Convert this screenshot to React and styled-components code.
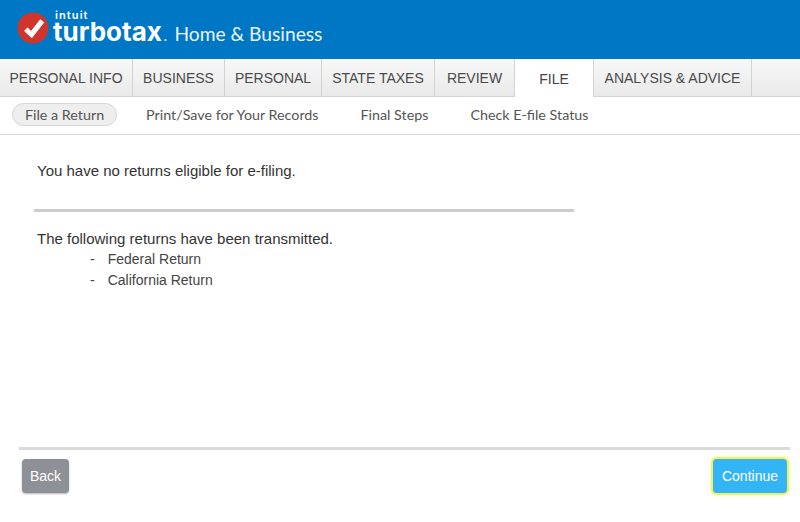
import React from "react";
import styled, { createGlobalStyle } from "styled-components";

const Global = createGlobalStyle`
  html, body {
    margin: 0;
    padding: 0;
    background: #fff;
    font-family: "Liberation Sans", Arial, sans-serif;
  }
`;

const Page = styled.div`
  width: 800px;
  height: 522px;
  display: flex;
  flex-direction: column;
  overflow: hidden;
`;

const Header = styled.header`
  height: 59px;
  background: #0077c5;
  display: flex;
  align-items: flex-start;
  padding-left: 17px;
  box-sizing: border-box;
`;

const Badge = styled.svg`
  width: 32px;
  height: 32px;
  margin-top: 12px;
  flex: none;
`;

const Wordmark = styled.div`
  margin-left: 4px;
  display: flex;
  flex-direction: column;
  color: #fff;
  font-family: Inter, sans-serif;
`;

const Intuit = styled.span`
  font-size: 11px;
  font-weight: 600;
  line-height: 9px;
  height: 9px;
  margin: 11px 0 0 2px;
  letter-spacing: 1.1px;
`;

const Brand = styled.span`
  font-size: 26px;
  font-weight: 700;
  line-height: 22px;
  margin-top: 1px;
`;

const Dot = styled.span`
  font-size: 16px;
  font-weight: 400;
  margin-left: 1px;
  color: #bfe3f7;
`;

const Product = styled.span`
  font-family: Lato, sans-serif;
  font-size: 19.2px;
  color: #eaf4fb;
  margin: 23px 0 0 7px;
  line-height: 22px;
`;

const Tabs = styled.nav`
  height: 38px;
  display: flex;
  background: linear-gradient(#f8f8f8, #e9e9e9);
  border-bottom: 1px solid #d4d4d4;
  box-sizing: border-box;
`;

const Tab = styled.div`
  width: ${(p) => p.$w}px;
  height: ${(p) => (p.$active ? "38px" : "37px")};
  box-sizing: border-box;
  display: flex;
  align-items: center;
  justify-content: center;
  font-size: 14px;
  color: ${(p) => (p.$active ? "#444" : "#4a4a4a")};
  border-right: 1px solid #d2d2d2;
  ${(p) => p.$active && "background: #fff; padding-top: 2px;"}
`;

const SubNav = styled.nav`
  height: 38px;
  display: flex;
  align-items: center;
  padding: 0 0 3px 12px;
  border-bottom: 1px solid #d9d9d9;
  box-sizing: border-box;
`;

const SubItem = styled.div`
  font-family: Lato, sans-serif;
  font-size: 14.3px;
  color: #555;
  height: 23px;
  line-height: 23px;
  box-sizing: border-box;
  margin-right: ${(p) => (p.$active ? "29px" : "42px")};
  ${(p) =>
    p.$active &&
    "padding: 0 12px; background: #eee; border: 1px solid #d6d6d6; border-radius: 12px; line-height: 21px;"}
`;

const Content = styled.main`
  flex: 1;
  padding: 27px 0 0 34px;
  color: #333;
  font-size: 15px;
`;

const Line = styled.p`
  margin: 0 0 0 3px;
  line-height: 18px;
`;

const Rule = styled.hr`
  width: 540px;
  height: 3px;
  margin: 29px 0 18px;
  border: none;
  background: #cccccc;
`;

const Returns = styled.ul`
  list-style: none;
  margin: 1px 0 0 56px;
  padding: 0;
  font-size: 14px;
  color: #444;
`;

const ReturnItem = styled.li`
  display: flex;
  height: 21px;
  line-height: 21px;
  gap: 13px;
`;

const Footer = styled.footer`
  margin: 0 10px 0 19px;
  border-top: 3px solid #d9d9d9;
  height: 75px;
  box-sizing: border-box;
  padding: 9px 3px 0 3px;
  display: flex;
  justify-content: space-between;
  align-items: flex-start;
`;

const Button = styled.button`
  height: 34px;
  border: none;
  border-radius: 4px;
  color: #fff;
  font-family: "Liberation Sans", sans-serif;
  font-size: 14px;
  padding: 0;
  width: ${(p) => (p.$primary ? "74px" : "47px")};
  background: ${(p) => (p.$primary ? "#33b5f5" : "#8d9096")};
  box-shadow: ${(p) =>
    p.$primary ? "0 0 0 2px #eef06a, 0 0 3px 3px #f8f9c0" : "0 1px 2px #b5b5b5"};
`;

const tabs = [
  ["PERSONAL INFO", 133],
  ["BUSINESS", 92],
  ["PERSONAL", 97],
  ["STATE TAXES", 113],
  ["REVIEW", 80],
  ["FILE", 79, true],
  ["ANALYSIS & ADVICE", 158],
];

export default function App() {
  return (
    <Page>
      <Global />
      <Header>
        <Badge viewBox="0 0 32 32">
          <circle cx="16" cy="16" r="15.5" fill="#d0352c" />
          <path
            d="M7.5 19L10.5 15.8L14 19.5L23.2 7.8L26.8 10.4L14.8 25.8Z"
            fill="#fff"
            stroke="#fff"
            strokeWidth="0.8"
            strokeLinejoin="round"
          />
        </Badge>
        <Wordmark>
          <Intuit>intuit</Intuit>
          <Brand>
            turbotax<Dot>.</Dot>
          </Brand>
        </Wordmark>
        <Product>Home &amp; Business</Product>
      </Header>
      <Tabs>
        {tabs.map(([label, w, active]) => (
          <Tab key={label} $w={w} $active={active}>
            {label}
          </Tab>
        ))}
      </Tabs>
      <SubNav>
        <SubItem $active>File a Return</SubItem>
        <SubItem>Print/Save for Your Records</SubItem>
        <SubItem>Final Steps</SubItem>
        <SubItem>Check E-file Status</SubItem>
      </SubNav>
      <Content>
        <Line>You have no returns eligible for e-filing.</Line>
        <Rule />
        <Line>The following returns have been transmitted.</Line>
        <Returns>
          <ReturnItem><span>-</span><span>Federal Return</span></ReturnItem>
          <ReturnItem><span>-</span><span>California Return</span></ReturnItem>
        </Returns>
      </Content>
      <Footer>
        <Button>Back</Button>
        <Button $primary>Continue</Button>
      </Footer>
    </Page>
  );
}
